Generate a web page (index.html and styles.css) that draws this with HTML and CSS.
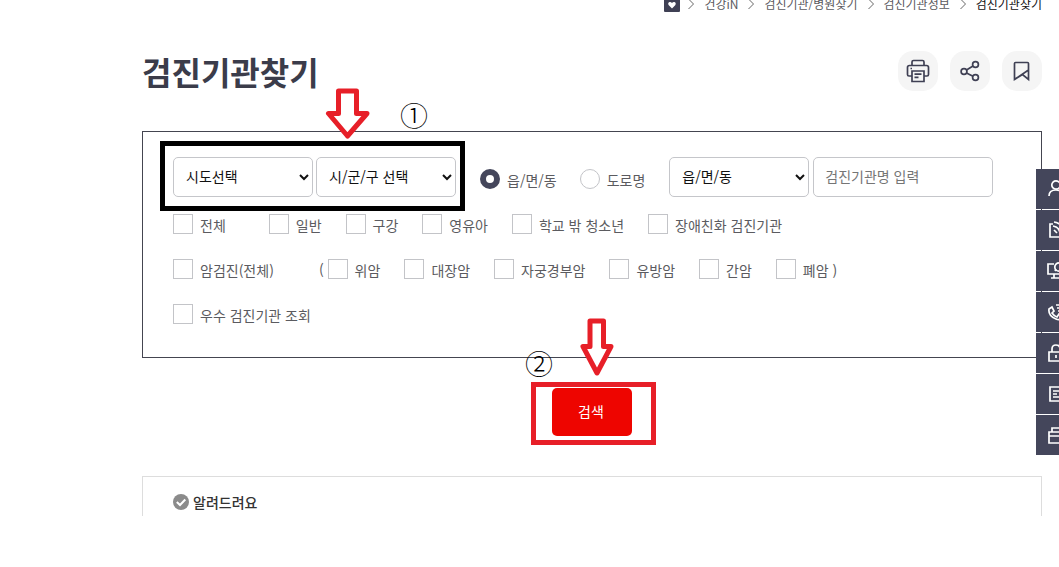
FILE: index.html
```html
<!DOCTYPE html>
<html lang="ko">
<head>
<meta charset="utf-8">
<title>검진기관찾기</title>
<link rel="stylesheet" href="styles.css">
</head>
<body>
<div class="page">
  <nav class="crumbs" aria-label="현재 위치">
    <a class="home" href="#" aria-label="홈"><svg width="16" height="16" viewBox="0 0 16 16"><rect width="16" height="16" rx="1" fill="#3f4054"/><path d="M8 12.500L4.800 9.200C3 7 6 4.600 8 7C10 4.600 13 7 11.200 9.200Z" fill="#fff"/></svg></a>
    <svg class="sep" viewBox="0 0 6 12"><path d="M.5 1L5.500 6L.5 11"/></svg>
    <a href="#">건강iN</a>
    <svg class="sep" viewBox="0 0 6 12"><path d="M.5 1L5.500 6L.5 11"/></svg>
    <a href="#">검진기관/병원찾기</a>
    <svg class="sep" viewBox="0 0 6 12"><path d="M.5 1L5.500 6L.5 11"/></svg>
    <a href="#">검진기관정보</a>
    <svg class="sep" viewBox="0 0 6 12"><path d="M.5 1L5.500 6L.5 11"/></svg>
    <a class="current" href="#">검진기관찾기</a>
  </nav>

  <header class="heading">
    <h1>검진기관찾기</h1>
    <div class="tools">
      <button type="button" aria-label="인쇄"><svg viewBox="0 0 24 24"><path d="M6 6.500V3Q6 1.500 7.500 1.500H16.500Q18 1.500 18 3V6.500M5.500 17H3Q1.500 17 1.500 15.500V8.500Q1.500 6.500 3.500 6.500H20.500Q22.500 6.500 22.500 8.500V15.500Q22.500 17 21 17H18.500M6 12H18V22.500H6ZM8.500 15.200H15.500M8.500 18.300H12.500M4.500 9.500H6"/></svg></button>
      <button type="button" aria-label="공유"><svg viewBox="0 0 24 24"><circle cx="17.500" cy="5.500" r="2.900"/><circle cx="6" cy="12.500" r="2.900"/><circle cx="17.500" cy="18.500" r="2.900"/><path d="M8.500 11L15 7M8.500 14L15 17.300"/></svg></button>
      <button type="button" aria-label="책갈피"><svg viewBox="0 0 24 24"><path d="M4.500 20.500V4.500Q4.500 3.500 5.500 3.500H17.500Q18.500 3.500 18.500 4.500V20.500L12.500 15.500ZM4.500 20.500L18.500 11"/></svg></button>
    </div>
  </header>

  <form class="finder">
    <div class="panel">
      <div class="row search">
        <div class="region">
          <select aria-label="시도"><option>시도선택</option></select>
          <select aria-label="시/군/구"><option>시/군/구 선택</option></select>
          <span class="frame black"></span>
          <svg class="arrow first" viewBox="0 0 46 52"><path d="M13.500 3H31.500V25.500H42L22.500 48L3.500 25.500H13.500Z"/></svg>
          <span class="step one">①</span>
        </div>
        <div class="kinds">
          <label><input type="radio" name="kind" checked><span>읍/면/동</span></label>
          <label><input type="radio" name="kind"><span>도로명</span></label>
        </div>
        <div class="keyword">
          <select aria-label="읍/면/동"><option>읍/면/동</option></select>
          <input type="text" aria-label="검진기관명" placeholder="검진기관명 입력">
        </div>
      </div>
      <div class="row checks">
        <label class="lead"><input type="checkbox"><span>전체</span></label>
        <label><input type="checkbox"><span>일반</span></label>
        <label><input type="checkbox"><span>구강</span></label>
        <label><input type="checkbox"><span>영유아</span></label>
        <label><input type="checkbox"><span>학교 밖 청소년</span></label>
        <label><input type="checkbox"><span>장애친화 검진기관</span></label>
      </div>
      <div class="row checks">
        <label class="lead"><input type="checkbox"><span>암검진(전체)</span></label>
        <div class="cancers">
          <span class="paren">(</span>
          <div class="list">
            <label><input type="checkbox"><span>위암</span></label>
            <label><input type="checkbox"><span>대장암</span></label>
            <label><input type="checkbox"><span>자궁경부암</span></label>
            <label><input type="checkbox"><span>유방암</span></label>
            <label><input type="checkbox"><span>간암</span></label>
            <label><input type="checkbox"><span>폐암 )</span></label>
          </div>
        </div>
      </div>
      <div class="row checks">
        <label><input type="checkbox"><span>우수 검진기관 조회</span></label>
      </div>
    </div>
    <div class="submit">
      <div class="target">
        <button type="submit">검색</button>
        <span class="frame red"></span>
        <svg class="arrow second" viewBox="0 0 34 60"><path d="M10 3H23.500V28.500H31L17 55L3 28.500H10Z"/></svg>
        <span class="step two">②</span>
      </div>
    </div>
  </form>

  <section class="notice">
    <svg viewBox="0 0 16 16"><circle cx="8" cy="8" r="8" fill="#8b8b8b"/><path d="M3.800 8L7 11L12.300 5.500" fill="none" stroke="#fff" stroke-width="2"/></svg>
    <h2>알려드려요</h2>
  </section>
</div>

<aside class="quick">
  <a href="#" aria-label="나의 건강"><svg viewBox="0 0 20 20"><circle cx="9" cy="6" r="4.200"/><path d="M2 17Q2 11 9 11T16 17"/></svg></a>
  <a href="#" aria-label="전자문서"><svg viewBox="0 0 20 20"><path d="M6 4H3V17H16V14M7 2Q15 3 17 12M6 6Q12 7 13 13M7 10L10 13"/></svg></a>
  <a href="#" aria-label="온라인 상담"><svg viewBox="0 0 20 20"><path d="M7 3H1V13H17M7 13V17M4 17H12M8 10L9 8"/><circle cx="12" cy="6" r="4.200"/></svg></a>
  <a href="#" aria-label="전화 상담"><svg viewBox="0 0 20 20"><path d="M2 7L5 5L7 9L5 11Q7 14 10 15L12 12L16 15Q13 19 9 17Q1 14 2 7ZM9 3H16M10 6H16M11 9H16"/></svg></a>
  <a href="#" aria-label="인증"><svg viewBox="0 0 20 20"><path d="M2 9H16V18H2ZM5 9V6Q5 2 9 2T13 6M9 12V15"/></svg></a>
  <a href="#" aria-label="서식"><svg viewBox="0 0 20 20"><path d="M3 3H17V17H3ZM6 7H12M6 10H10M6 13H14"/></svg></a>
  <a href="#" aria-label="자료실"><svg viewBox="0 0 20 20"><path d="M2 7H17V18H2ZM5 7V3H17M2 11H17"/></svg></a>
</aside>
</body>
</html>
```
FILE: styles.css
```css
* {
  box-sizing: border-box;
}

body {
  margin: 0;
  overflow: hidden;
  background: #fff;
  color: #5b5b60;
  font: 14px/20px "Noto Sans CJK KR", sans-serif;
}

button,
input,
select {
  font: inherit;
}

a {
  color: inherit;
  text-decoration: none;
}

.page {
  padding: 0 17px 0 142px;
}

.crumbs {
  display: flex;
  justify-content: flex-end;
  align-items: center;
  gap: 10px;
  margin-top: -6px;
  font-size: 12px;
}

.crumbs .home {
  margin-right: -2px;
}

.crumbs svg {
  display: block;
}

.crumbs .sep {
  width: 6px;
  height: 12px;
  fill: none;
  stroke: #666;
}

.crumbs .current {
  color: #111;
}

.heading {
  display: flex;
  justify-content: space-between;
  align-items: center;
  padding: 37px 0 40px;
}

h1 {
  margin: 0;
  color: #3b3c4a;
  font-size: 32px;
  line-height: 40px;
}

.tools {
  display: flex;
  gap: 12px;
}

.tools button {
  display: grid;
  place-items: center;
  width: 40px;
  height: 40px;
  padding: 0;
  border: 0;
  border-radius: 15px;
  background: #f5f5f5;
}

.tools svg {
  width: 24px;
  height: 24px;
  fill: none;
  stroke: #3f4054;
  stroke-width: 1.7;
}

.panel {
  display: flex;
  flex-direction: column;
  gap: 25px;
  padding: 25px 30px 33px;
  border: 1px solid #444550;
}

.row {
  display: flex;
  align-items: center;
}

.search {
  margin-bottom: -8px;
}

.region,
.keyword {
  position: relative;
  display: flex;
  gap: 4px;
}

.region {
  gap: 3px;
}

select,
input[type="text"] {
  width: 140px;
  height: 40px;
  padding: 0 1px 2px 8px;
  border: 1px solid #c5c6ca;
  border-radius: 5px;
  background: #fff;
  color: #111;
}

input[type="text"] {
  width: 180px;
  padding: 0 11px 2px;
}

input::placeholder {
  color: #757575;
}

.kinds {
  display: flex;
  gap: 23px;
  margin: 4px 24px 0 24px;
}

label {
  display: flex;
  align-items: center;
  gap: 7px;
  white-space: nowrap;
}

label span {
  padding-top: 1px;
  line-height: 18px;
}

input[type="radio"],
input[type="checkbox"] {
  appearance: none;
  width: 20px;
  height: 20px;
  margin: 0;
  border: 1px solid #c3c4c8;
  background: #fff;
}

input[type="radio"] {
  border-radius: 50%;
}

input[type="radio"]:checked {
  border: 6px solid #44465b;
}

.checks,
.cancers .list {
  display: flex;
  gap: 24px;
}

.checks .lead {
  margin-right: 19px;
}

.cancers {
  display: flex;
  align-items: center;
  gap: 4px;
  padding-left: 2px;
}

.submit {
  display: flex;
  justify-content: center;
  padding: 30px 0 40px;
}

.target {
  position: relative;
}

.target button {
  display: block;
  width: 80px;
  height: 48px;
  padding: 0 2px 2px 0;
  border: 0;
  border-radius: 5px;
  background: #ee0500;
  color: #fff;
}

.frame {
  position: absolute;
  pointer-events: none;
}

.black {
  inset: -16px -9px -14px -13px;
  border: 5px solid #000;
}

.red {
  inset: -6px -24px -9px -21px;
  border: 5px solid #e71f28;
}

.arrow {
  position: absolute;
  fill: #fff;
  stroke: #e71f28;
  stroke-width: 5;
  stroke-linejoin: round;
}

.first {
  top: -69px;
  left: 152px;
  width: 46px;
  height: 52px;
}

.second {
  top: -70px;
  left: 28px;
  width: 34px;
  height: 60px;
}

.step {
  position: absolute;
  color: #000;
  font-size: 28px;
  font-weight: 300;
  line-height: 28px;
}

.one {
  top: -56px;
  left: 227px;
}

.two {
  top: -39px;
  left: -27px;
}

.notice {
  display: flex;
  align-items: center;
  gap: 4px;
  padding: 15px 30px 4px;
  border: 1px solid #ddd;
  border-bottom: 0;
}

.notice svg {
  width: 16px;
  height: 16px;
}

.notice h2 {
  margin: 0;
  color: #333;
  font-size: 14px;
  font-weight: 500;
}

.quick {
  position: absolute;
  top: 169px;
  right: 0;
  display: grid;
  gap: 1px;
  width: 23px;
}

.quick a {
  display: flex;
  align-items: center;
  height: 40px;
  padding-left: 11px;
  overflow: hidden;
  background: #44465b;
}

.quick svg {
  flex: none;
  width: 20px;
  height: 20px;
  fill: none;
  stroke: #fff;
  stroke-width: 1.7;
}
```
